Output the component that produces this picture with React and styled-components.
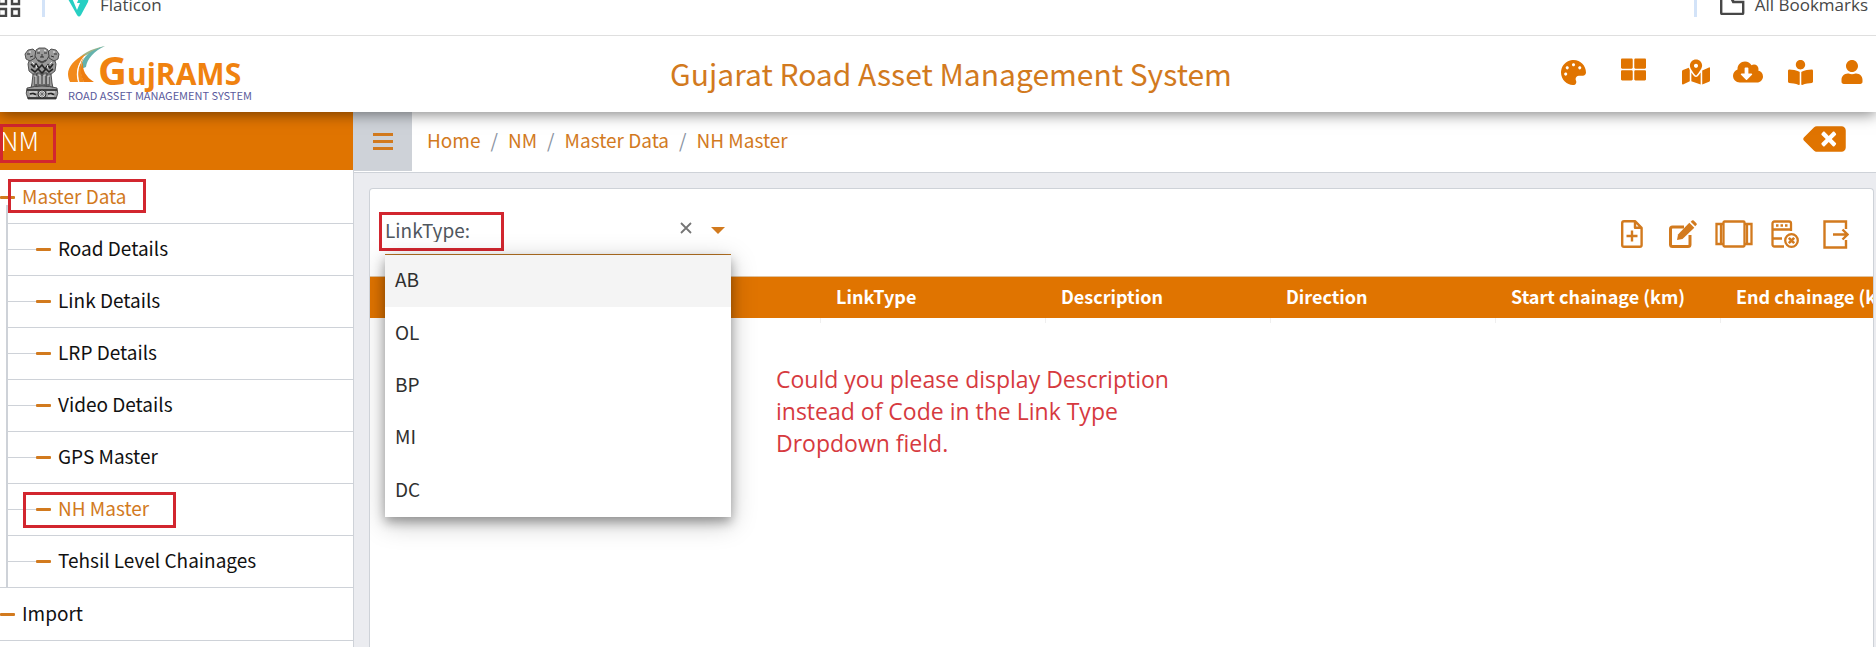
import React, { useState } from 'react';
import styled, { createGlobalStyle } from 'styled-components';
import {
  FaPalette,
  FaThLarge,
  FaMapMarkedAlt,
  FaCloudDownloadAlt,
  FaBookReader,
  FaUser,
  FaBackspace,
} from 'react-icons/fa';

const orange = '#e07400';
const textOrange = '#d27a1e';
const line = '#ced2d8';

const subItems = [
  'Road Details',
  'Link Details',
  'LRP Details',
  'Video Details',
  'GPS Master',
  'NH Master',
  'Tehsil Level Chainages',
];
const crumbs = ['Home', 'NM', 'Master Data', 'NH Master'];
const linkTypes = ['AB', 'OL', 'BP', 'MI', 'DC'];
const columns = ['', '', 'LinkType', 'Description', 'Direction', 'Start chainage (km)', 'End chainage (km)'];

const Emblem = () => (
  <svg width="36" height="54" viewBox="0 0 36 54" role="img" aria-label="State emblem">
    <g fill="#9a9a9a" stroke="#333" strokeWidth="0.8">
      <path d="M6 11 L4 17 L5 24 L10 28 L26 28 L31 24 L32 17 L30 11 L24 7 L12 7 Z" />
      <path d="M1 7 L4 3 L9 2 L12 5 L11 11 L6 14 L2 12 Z" />
      <path d="M35 7 L32 3 L27 2 L24 5 L25 11 L30 14 L34 12 Z" />
      <path d="M12 3 L15 1 L21 1 L24 3 L25 9 L22 14 L18 16 L14 14 L11 9 Z" />
      <path d="M9 27 L13 27 L13 40 L7 41 L8 36 Z" />
      <path d="M13 26 L17 26 L17 40 L13 40 Z" />
      <path d="M19 26 L23 26 L23 40 L19 40 Z" />
      <path d="M27 27 L23 27 L23 40 L29 41 L28 36 Z" />
      <path d="M3 41 Q1 46 4 52 L32 52 Q35 46 33 41 Q18 37 3 41 Z" />
    </g>
    <g stroke="#262626" strokeWidth="0.9" fill="none">
      <path d="M13 6h3M20 6h3M16 10h4M18 7v3M14 13l4 2 4-2M3 7h3M30 7h3M6 10l3-1M30 10l-3-1" />
      <path d="M7 17l3 3 2-3 3 4 3-3 3 4 3-4 2 3 3-4M7 22l4 3 3-3 4 4 4-4 3 3 4-3" strokeWidth="1.6" />
      <path d="M15 29v10M21 29v10M11 30v9M25 30v9M18 28v11" />
      <path d="M3 43h30M4 51h28" strokeWidth="1.6" />
      <path d="M6 47l3-1 3 2M24 47l3-1 3 2" strokeWidth="1.6" />
    </g>
    <g stroke="#ececec" strokeWidth="1" fill="none">
      <path d="M8 15l2 2M12 18l1 3M24 18l-1 3M28 15l-2 2M14 4l2-1M20 3l2 1M5 5l2 0M29 5l2 0" />
      <path d="M12 29v8M16 28v9M20 28v9M24 29v8M5 45h8M23 45h8M6 49h6M24 49h6" />
    </g>
    <circle cx="18" cy="47" r="4" fill="#d8d8d8" stroke="#2e2e2e" />
    <path d="M18 43v8M14 47h8M15 44l6 6M21 44l-6 6" stroke="#555" strokeWidth="0.6" />
  </svg>
);

const Swoosh = () => (
  <svg width="38" height="38" viewBox="0 0 38 38" aria-hidden="true">
    <path d="M37 1 C22 4 13 9 8 17 C14 11 18 10 22 9 C26 6 31 3 37 1 Z" fill="#9db58a" />
    <path d="M37 1 C24 5 13 11 13 24 L18 22 C19 14 26 6 37 1 Z" fill="#64b2ad" />
    <path d="M18 9 C6 14 0 22 0 29 C0 32 1 35 2 37 L10 37 C7 27 10 17 18 9 Z" fill="#f28a1b" />
    <path d="M16 12 C10 20 9 29 11 37 L16 37 C12 28 12 20 16 12 Z" fill="#f28a1b" />
    <path d="M15 17 C14 25 18 32 26 37 L16 37 C12 30 12 23 15 17 Z" fill="#ee7d10" />
    <path d="M13 17 C9 23 9 30 11 37" fill="none" stroke="#fff" strokeWidth="0.8" />
  </svg>
);

const IconFile = () => (
  <svg width="22" height="28" viewBox="0 0 22 28" fill="none" stroke="currentColor" strokeWidth="2.4">
    <path d="M3 1.200h11l6.600 6.600V25q0 1.800-1.800 1.800H3q-1.800 0-1.800-1.800V3q0-1.800 1.800-1.800zM14 1.200v6.600h6.600" strokeLinejoin="round" />
    <path d="M11 10.500v11M5.500 16h11" />
  </svg>
);

const IconEdit = () => (
  <svg width="28" height="28" viewBox="0 0 28 28">
    <path d="M15 7H3.500Q1.500 7 1.500 9v15.500q0 2 2 2H19q2 0 2-2V15" fill="none" stroke="currentColor" strokeWidth="3" />
    <path d="M8 20l1-5.500L20.300 2.800l5 5L13.500 19z" fill="currentColor" />
    <path d="M21.700 1.800L23 .6q.8-.8 1.700 0l2.700 2.700q.8.800 0 1.700L26.200 6.300z" fill="currentColor" />
  </svg>
);

const IconCarousel = () => (
  <svg width="38" height="28" viewBox="0 0 38 28" fill="none" stroke="currentColor" strokeWidth="2.3">
    <rect x="8.500" y="1.500" width="21" height="25" rx="1" />
    <path d="M8 4H1.500v20H8M30 4h6.500v20H30M6 4v20M32 4v20" />
  </svg>
);

const IconServer = () => (
  <svg width="28" height="28" viewBox="0 0 28 28" fill="none" stroke="currentColor" strokeWidth="2.300">
    <path d="M13 26.500H3.500q-2 0-2-2v-21q0-2 2-2H18q2 0 2 2V11M1.500 9.500h18.500M1.500 18.500H11" />
    <path d="M5 5.500h2.500M9.500 5.500h2.500M14 5.500h2.500" strokeWidth="2.500" />
    <circle cx="20.500" cy="20.500" r="6.300" />
    <path d="M17.800 17.800l5.400 5.400M23.200 17.800l-5.400 5.400" strokeWidth="2.600" />
  </svg>
);

const IconExit = () => (
  <svg width="26" height="29" viewBox="0 0 26 29" fill="none" stroke="currentColor" strokeWidth="2.400">
    <path d="M23 9V1.500H1.500v26H23V20" />
    <path d="M10 14.500h14M19.500 9.500l5 5-5 5" />
  </svg>
);

const tools = [
  { name: 'Add', icon: <IconFile /> },
  { name: 'Edit', icon: <IconEdit /> },
  { name: 'View', icon: <IconCarousel /> },
  { name: 'Clear data', icon: <IconServer /> },
  { name: 'Export', icon: <IconExit /> },
];

const App = () => {
  const [linkType, setLinkType] = useState('');
  return (
    <>
      <GlobalStyle />
      <Page>
        <BookmarkBar>
          <svg width="24" height="24" viewBox="0 0 24 24" fill="none" stroke="#474747" strokeWidth="2.4" aria-hidden="true">
            <path d="M2 4h7v7H2zM15 4h7v7h-7zM2 16h7v7H2zM15 16h7v7h-7z" />
          </svg>
          <BarDivider />
          <Bookmark href="#flaticon">
            <svg width="22" height="24" viewBox="0 0 22 24" aria-hidden="true">
              <path d="M0 0h22l-2 9-7 13q-2 3-4 0L0 6z" fill="#27cfc3" />
              <path d="M4 5h7l-2 5 3 0-3 7z" fill="#fff" />
            </svg>
            Flaticon
          </Bookmark>
          <BarSpacer />
          <BarDivider />
          <Bookmark href="#bookmarks">
            <svg width="25" height="20" viewBox="0 0 25 20" fill="none" stroke="#474747" strokeWidth="2.4" aria-hidden="true">
              <path d="M1.200 1h9l3 6h10v11q0 1-1 1h-20q-1 0-1-1zM13 1v6" />
            </svg>
            All Bookmarks
          </Bookmark>
        </BookmarkBar>

        <Header>
          <Brand>
            <Emblem />
            <BrandText>
              <BrandTop>
                <Swoosh />
                <BrandName><BigLetter>G</BigLetter>ujRAMS</BrandName>
              </BrandTop>
              <Tagline>ROAD ASSET MANAGEMENT SYSTEM</Tagline>
            </BrandText>
          </Brand>
          <Title>Gujarat Road Asset Management System</Title>
          <HeaderNav>
            <NavIcon href="#theme" aria-label="Theme" $gap={8}><FaPalette size={25} /></NavIcon>
            <NavIcon href="#modules" aria-label="Modules" $gap={11} $raised><FaThLarge size={25} /></NavIcon>
            <NavIcon href="#map" aria-label="Map"><FaMapMarkedAlt size={28} /></NavIcon>
            <NavIcon href="#download" aria-label="Download"><FaCloudDownloadAlt size={30} /></NavIcon>
            <NavIcon href="#guide" aria-label="Guide"><FaBookReader size={25} /></NavIcon>
            <NavIcon href="#user" aria-label="User"><FaUser size={24} /></NavIcon>
          </HeaderNav>
        </Header>

        <Body>
          <Sidebar>
            <SideTitle>NM<Mark $top={12} $left={0} $width={56} $height={39} /></SideTitle>
            <Tree>
              <li>
                <TreeLink href="#master-data" $active>
                  <Dash /><Label>Master Data</Label>
                  <Mark $top={8} $left={8} $width={138} $height={34} />
                </TreeLink>
                <SubTree>
                  {subItems.map((item) => (
                    <li key={item}>
                      <SubLink href="#item" $active={item === 'NH Master'}>
                        <Connector /><Dash /><Label>{item}</Label>
                        {item === 'NH Master' && <Mark $top={8} $left={15} $width={153} $height={36} />}
                      </SubLink>
                    </li>
                  ))}
                </SubTree>
              </li>
              <li>
                <TreeLink href="#import"><Dash /><Label>Import</Label></TreeLink>
              </li>
            </Tree>
          </Sidebar>

          <Content>
            <CrumbBar>
              <MenuButton aria-label="Toggle menu">
                <svg width="20" height="18" viewBox="0 0 20 18" fill="currentColor">
                  <path d="M0 0h20v3H0zM0 7h20v3H0zM0 14h20v3H0z" />
                </svg>
              </MenuButton>
              <Crumbs>
                {crumbs.map((c) => (
                  <li key={c}><a href="#crumb">{c}</a></li>
                ))}
              </Crumbs>
              <BackButton aria-label="Close page"><FaBackspace /></BackButton>
            </CrumbBar>

            <Card>
              <Toolbar>
                <Field>
                  <Select aria-label="LinkType" value={linkType} onChange={(e) => setLinkType(e.target.value)}>
                    <option value="">LinkType:</option>
                    {linkTypes.map((t) => <option key={t}>{t}</option>)}
                  </Select>
                  <ClearButton aria-label="Clear" onClick={() => setLinkType('')}>
                    <svg width="12" height="12" viewBox="0 0 12 12" stroke="#757575" strokeWidth="1.800">
                      <path d="M1 1l10 10M11 1L1 11" />
                    </svg>
                  </ClearButton>
                  <Caret />
                  <Mark $top={5} $left={-6} $width={125} $height={39} />
                  <Options role="listbox" aria-label="Link types">
                    {linkTypes.map((t, i) => (
                      <Option key={t} role="option" aria-selected={i === 0} $hover={i === 0} onClick={() => setLinkType(t)}>{t}</Option>
                    ))}
                  </Options>
                </Field>
                <Tools>
                  {tools.map((t) => <ToolButton key={t.name} aria-label={t.name}>{t.icon}</ToolButton>)}
                </Tools>
              </Toolbar>
              <Table>
                <thead>
                  <tr>{columns.map((c, i) => <th key={i} scope="col">{c}</th>)}</tr>
                </thead>
                <tbody>
                  <tr>{columns.map((c, i) => <td key={i} />)}</tr>
                </tbody>
              </Table>
              <Note>
                Could you please display Description<br />
                instead of Code in the Link Type<br />
                Dropdown field.
              </Note>
            </Card>
          </Content>
        </Body>
      </Page>
    </>
  );
};

const GlobalStyle = createGlobalStyle`
* { box-sizing: border-box; }
body {
  margin: 0;
  overflow: hidden;
  font-family: "Noto Sans CJK SC", "Noto Sans", sans-serif;
  font-size: 19px;
  line-height: 24px;
  color: #111;
}
a { color: inherit; text-decoration: none; }
ul, ol { list-style: none; margin: 0; padding: 0; }
button { border: 0; padding: 0; background: none; color: inherit; font: inherit; cursor: pointer; }
svg { display: block; flex: none; }
`;
const Page = styled.div`
display: flex;
flex-direction: column;
height: 100vh;
background: #fff;
`;
const BookmarkBar = styled.div`
flex: none;
position: relative;
z-index: 3;
display: flex;
align-items: center;
height: 36px;
padding: 0 8px 26px 0;
overflow: hidden;
border-bottom: 1px solid #dfdfdf;
background: #fff;
& > svg { margin-left: -3px; }
`;
const BarDivider = styled.span`
flex: none;
width: 3px;
height: 24px;
margin: 0 23px 0 21px;
background: #d3e3f8;
`;
const BarSpacer = styled.span`
flex: 1;
`;
const Bookmark = styled.a`
display: flex;
align-items: center;
gap: 10px;
font-family: "Open Sans", sans-serif;
font-size: 17px;
color: #474747;
`;
const Header = styled.header`
flex: none;
position: relative;
z-index: 2;
display: grid;
grid-template-columns: 1fr auto 1fr;
align-items: center;
height: 76px;
background: #fff;
box-shadow: 0 2px 14px rgba(0, 0, 0, 0.5);
`;
const Brand = styled.div`
display: flex;
align-items: center;
gap: 8px;
padding-left: 24px;
`;
const BrandText = styled.div`
display: flex;
flex-direction: column;
`;
const BrandTop = styled.div`
display: flex;
align-items: flex-start;
height: 42px;
`;
const BrandName = styled.span`
margin-left: -8px;
font-family: "Open Sans", sans-serif;
font-size: 30px;
font-weight: 700;
line-height: 50px;
color: #f0820f;
`;
const BigLetter = styled.span`
font-size: 40px;
`;
const Tagline = styled.span`
font-size: 11px;
line-height: 16px;
color: #5a5a9c;
`;
const Title = styled.h1`
margin: 0;
padding: 0 0 2px 26px;
font-size: 30px;
font-weight: 400;
line-height: 40px;
color: ${textOrange};
`;
const HeaderNav = styled.nav`
display: flex;
justify-content: flex-end;
padding-bottom: 4px;
`;
const NavIcon = styled.a`
display: flex;
justify-content: center;
align-items: center;
width: 48px;
height: 32px;
margin-left: 4px;
margin-right: ${(p) => p.$gap || 0}px;
padding-bottom: ${(p) => (p.$raised ? '6px' : '0')};
color: ${orange};
`;
const Body = styled.div`
flex: 1;
display: flex;
min-height: 0;
`;
const Sidebar = styled.aside`
flex: none;
width: 354px;
border-right: 1px solid ${line};
background: #fff;
`;
const SideTitle = styled.div`
position: relative;
height: 58px;
padding: 12px 0;
font-size: 26px;
font-weight: 300;
line-height: 32px;
color: #fff;
background: ${orange};
`;
// red review rectangles drawn over the page
const Mark = styled.span`
position: absolute;
top: ${(p) => p.$top}px;
left: ${(p) => p.$left}px;
width: ${(p) => p.$width}px;
height: ${(p) => p.$height}px;
border: 3px solid #d2262f;
pointer-events: none;
`;
const Tree = styled.ul`
& > li {
  position: relative;
  border-bottom: 1px solid ${line};
}
& > li:first-child { padding-top: 1px; }
& > li:first-child::before {
  content: '';
  position: absolute;
  top: 35px;
  bottom: 0;
  left: 6px;
  width: 2px;
  background: ${line};
}
`;
const TreeLink = styled.a`
position: relative;
display: flex;
align-items: center;
height: 52px;
color: ${(p) => (p.$active ? textOrange : '#111')};
`;
const SubTree = styled.ul`
margin-left: 8px;
`;
const SubLink = styled.a`
position: relative;
display: flex;
align-items: center;
height: 52px;
border-top: 1px solid ${line};
color: ${(p) => (p.$active ? textOrange : '#111')};
`;
const Label = styled.span`
padding: 0 0 3px 7px;
`;
const Dash = styled.span`
width: 15px;
height: 3px;
border-radius: 1px;
background: ${textOrange};
`;
const Connector = styled.span`
width: 28px;
height: 1px;
background: ${line};
`;
const Content = styled.main`
flex: 1;
display: flex;
flex-direction: column;
min-width: 0;
background: #ebecf0;
`;
const CrumbBar = styled.div`
flex: none;
display: flex;
height: 61px;
border-bottom: 1px solid ${line};
background: #fff;
`;
const MenuButton = styled.button`
display: flex;
justify-content: center;
align-items: center;
width: 58px;
height: 59px;
background: #ced2d8;
color: ${textOrange};
`;
const Crumbs = styled.ol`
flex: 1;
display: flex;
align-items: center;
height: 59px;
padding: 0 0 4px 15px;
color: ${textOrange};
li + li::before {
  content: '/';
  margin: 0 10px;
  color: #8a93a2;
}
`;
const BackButton = styled.button`
margin-right: 30px;
height: 54px;
color: ${orange};
svg { width: 43px; height: 34px; }
`;
const Card = styled.section`
flex: 1;
min-height: 0;
margin: 15px 2px 0 15px;
border: 1px solid ${line};
border-bottom: 0;
border-radius: 4px 4px 0 0;
overflow: hidden;
background: #fff;
`;
const Toolbar = styled.div`
display: flex;
justify-content: space-between;
height: 87px;
padding: 18px 12px 0 15px;
`;
const Field = styled.div`
position: relative;
z-index: 1;
display: flex;
align-items: center;
width: 346px;
height: 48px;
border-bottom: 1px solid #b87322;
`;
const Select = styled.select`
flex: 1;
height: 40px;
padding: 0 0 2px;
border: 0;
outline: 0;
appearance: none;
background: transparent;
font: inherit;
color: #50575e;
`;
const ClearButton = styled.button`
padding-bottom: 6px;
`;
const Caret = styled.span`
margin: 0 6px 0 19px;
border: 7px solid transparent;
border-top-color: ${textOrange};
border-bottom: 0;
`;
const Options = styled.ul`
position: absolute;
top: 48px;
left: 0;
right: 0;
display: grid;
height: 262px;
background: #fff;
box-shadow: 0 5px 10px rgba(0, 0, 0, 0.3), 0 6px 24px rgba(0, 0, 0, 0.25);
`;
const Option = styled.li`
display: flex;
align-items: center;
padding: 0 10px 4px;
color: #2f2f2f;
background: ${(p) => (p.$hover ? '#f4f4f4' : '#fff')};
cursor: pointer;
`;
const Tools = styled.div`
display: flex;
height: 54px;
`;
const ToolButton = styled.button`
display: flex;
justify-content: center;
align-items: center;
width: 51px;
color: ${textOrange};
`;
const Table = styled.table`
table-layout: fixed;
width: 1575px;
border-collapse: collapse;
th {
  height: 41px;
  padding: 0 16px 3px;
  border-top: 1px solid #e0c3a0;
  text-align: left;
  font-size: 18px;
  font-weight: 700;
  white-space: nowrap;
  color: #fff;
  background: ${orange};
}
td {
  height: 5px;
  padding: 0;
}
td + td { border-left: 1px solid #efefef; }
`;
const Note = styled.p`
margin: 40px 0 0 406px;
font-family: "Open Sans", sans-serif;
font-size: 23px;
line-height: 32px;
color: #d63a3f;
`;
export default App;
